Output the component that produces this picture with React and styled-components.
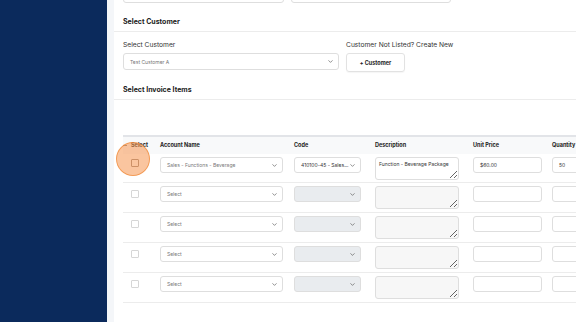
import styled, { createGlobalStyle } from "styled-components";
import { ChevronDown } from "lucide-react";

const GlobalStyle = createGlobalStyle`
  html, body {
    margin: 0;
    padding: 0;
    width: 576px;
    height: 322px;
    overflow: hidden;
    font-family: "Inter", "Noto Sans", sans-serif;
    color: #222;
  }
  * { box-sizing: border-box; }
`;

const Page = styled.div`
  display: flex;
  width: 576px;
  height: 322px;
`;

const Sidebar = styled.div`
  width: 107px;
  flex-shrink: 0;
  background: #0b2a5c;
`;

const Main = styled.div`
  flex: 1;
  background: #f4f6f9;
  padding-left: 7px;
  overflow: hidden;
`;

const Card = styled.div`
  background: #fff;
  height: 100%;
  overflow: hidden;
`;

const Scroll = styled.div`
  margin-top: -13px;
`;

const TopRow = styled.div`
  display: flex;
  gap: 7px;
  padding: 0 9px;
`;

const Input = styled.div`
  width: ${(p) => p.$w}px;
  height: ${(p) => p.$h || 16}px;
  border: 1px solid #dedede;
  border-radius: 3px;
  background: ${(p) => (p.$disabled ? "#e9ecef" : "#fff")};
  display: flex;
  align-items: center;
  padding: 0 4px 0 6px;
  font-size: 5px;
  color: ${(p) => (p.$dark ? "#333" : "#777")};
  flex-shrink: 0;
  white-space: nowrap;
  overflow: hidden;
`;

const ChevWrap = styled.span`
  margin-left: auto;
  display: flex;
  align-items: center;
`;

const SectionTitle = styled.div`
  font-size: 7px;
  font-weight: 700;
  padding: 0 9px 5px;
  height: ${(p) => p.$h}px;
  display: flex;
  align-items: flex-end;
  border-bottom: 1px solid #ececec;
`;

const FieldRow = styled.div`
  display: flex;
  gap: 7px;
  padding: 8px 9px 0;
`;

const Field = styled.div`
  display: flex;
  flex-direction: column;
  gap: 3px;
`;

const Label = styled.div`
  font-size: 6.7px;
  color: #333;
  height: 10px;
  line-height: 10px;
`;

const Button = styled.div`
  width: 59px;
  height: 19px;
  border: 1px solid #e2e2e2;
  border-radius: 3px;
  display: flex;
  align-items: center;
  justify-content: center;
  font-size: 5.5px;
  font-weight: 700;
  color: #222;
  box-shadow: 0 1px 1px rgba(0, 0, 0, 0.04);
`;

const Table = styled.div`
  margin: 35px 0 0 9px;
  border-top: 2px solid #e2e4e8;
  width: 520px;
`;

const Row = styled.div`
  display: grid;
  grid-template-columns: 37px 134px 81px 98px 79px 60px;
  height: ${(p) => p.$h}px;
  border-bottom: 1px solid ${(p) => (p.$head ? "transparent" : "#ececec")};
  background: ${(p) => (p.$head ? "#f8f9fa" : "#fff")};
  align-items: ${(p) => (p.$head ? "center" : "start")};
  padding-top: ${(p) => (p.$head ? 0 : 3)}px;
`;

const Head = styled.div`
  font-size: 5.5px;
  font-weight: 700;
  color: #222;
  display: flex;
  align-items: center;
  gap: 4px;
`;

const SortMark = styled.span`
  width: 4px;
  height: 1px;
  background: #888;
`;

const CheckCell = styled.div`
  position: relative;
  padding: ${(p) => p.$top}px 0 0 8px;
`;

const Box = styled.div`
  width: 8px;
  height: 8px;
  border: 1px solid ${(p) => (p.$active ? "#9a8a80" : "#d6d6d6")};
  border-radius: 1px;
  background: #fff;
`;

const Ring = styled.div`
  position: absolute;
  left: -7px;
  top: -15px;
  width: 34px;
  height: 34px;
  border-radius: 50%;
  background: rgba(246, 150, 80, 0.55);
  border: 1px solid rgba(240, 140, 60, 0.75);
  pointer-events: none;
`;

const Area = styled.textarea`
  width: 84px;
  height: 23px;
  border: 1px solid #dedede;
  border-radius: 3px;
  background: ${(p) => (p.$disabled ? "#f7f7f7" : "#fff")};
  font-family: "Inter", "Noto Sans", sans-serif;
  font-size: 5px;
  color: #333;
  padding: 3px 3px;
  margin: 0;
  display: block;
  outline: none;
  white-space: pre;
  overflow: hidden;
`;

const Chev = () => (
  <ChevWrap>
    <ChevronDown size={7} color="#555" strokeWidth={2.2} />
  </ChevWrap>
);

const rows = [
  { account: "Sales - Functions - Beverage", code: "410100-45 - Sales...", desc: "Function - Beverage Package", price: "$60.00", qty: "50" },
  {},
  {},
  {},
  {},
];

export default function App() {
  return (
    <Page>
      <GlobalStyle />
      <Sidebar />
      <Main>
        <Card>
          <Scroll>
            <TopRow>
              <Input $w={161} />
              <Input $w={160} />
            </TopRow>
            <SectionTitle $h={29}>Select Customer</SectionTitle>
            <FieldRow>
              <Field>
                <Label>Select Customer</Label>
                <Input $w={216} $h={17}>
                  Test Customer A
                  <Chev />
                </Input>
              </Field>
              <Field>
                <Label>Customer Not Listed? Create New</Label>
                <Button>+ Customer</Button>
              </Field>
            </FieldRow>
            <SectionTitle $h={28}>Select Invoice Items</SectionTitle>
            <Table>
              <Row $head $h={17}>
                <Head>
                  <SortMark />
                  Select
                </Head>
                <Head>Account Name</Head>
                <Head>Code</Head>
                <Head>Description</Head>
                <Head>Unit Price</Head>
                <Head>Quantity</Head>
              </Row>
              {rows.map((r, i) => (
                <Row key={i} $h={i === 0 ? 29 : 30}>
                  <CheckCell $top={i === 0 ? 2 : 4}>
                    {i === 0 && <Ring />}
                    <Box $active={i === 0} />
                  </CheckCell>
                  <Input $w={123}>
                    {r.account || "Select"}
                    <Chev />
                  </Input>
                  <Input $w={67} $disabled={!r.code} $dark={!!r.code}>
                    {r.code || ""}
                    <Chev />
                  </Input>
                  <Area $disabled={!r.desc} defaultValue={r.desc || ""} />
                  <Input $w={69} $dark>
                    {r.price || ""}
                  </Input>
                  <Input $w={60} $dark>
                    {r.qty || ""}
                  </Input>
                </Row>
              ))}
            </Table>
          </Scroll>
        </Card>
      </Main>
    </Page>
  );
}
